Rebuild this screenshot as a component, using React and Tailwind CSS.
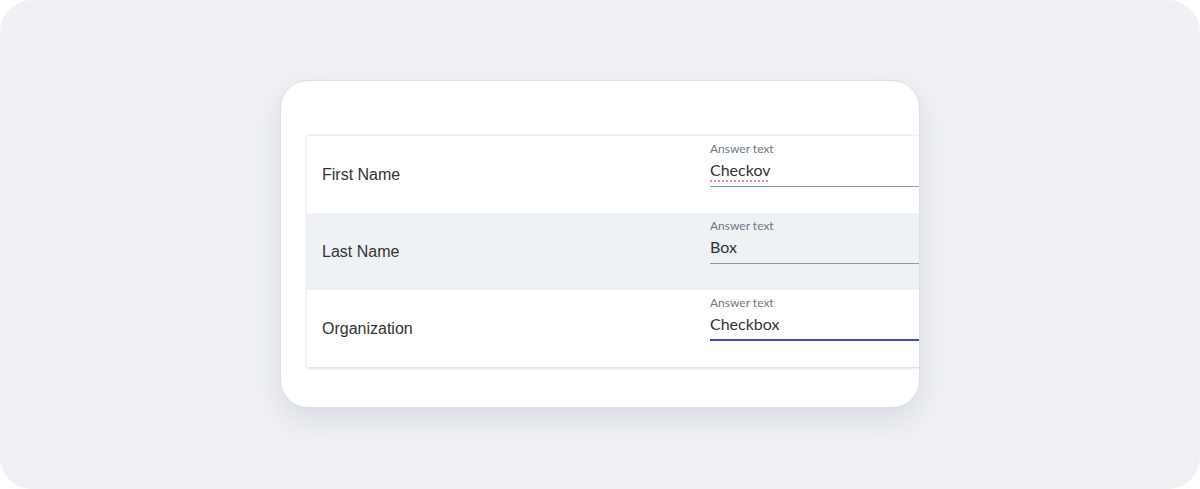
import React from 'react';

const rows = [
  { label: 'First Name', value: 'Checkov', misspelled: true },
  { label: 'Last Name', value: 'Box', shaded: true },
  { label: 'Organization', value: 'Checkbox', focused: true },
];

const App = () => {
  return (
    <div className="w-[1200px] h-[489px] bg-[#eff1f4] rounded-[32px] flex justify-center pt-[80px]">
      <div className="w-[640px] h-[328px] bg-white rounded-[28px] border border-[#dcdfe4] shadow-[0_12px_28px_rgba(120,130,150,0.18)] overflow-hidden pt-[54px] pl-[26px]">
        <div className="w-[700px] border-t border-[#eceef0] shadow-[0_1px_3px_rgba(0,0,0,0.18)]">
          {rows.map((row) => (
            <div
              key={row.label}
              className={`h-[77px] flex ${row.shaded ? 'bg-[#eff2f5]' : 'bg-white'}`}
            >
              <div className="w-[403px] pl-[15px] self-center text-[16px] text-[#333] font-['Liberation_Sans',Arial,sans-serif]">
                {row.label}
              </div>
              <div className="flex-1 pt-[5px] font-['Lato',sans-serif]">
                <div className="text-[12px] leading-[16px] text-[#6b7785]">Answer text</div>
                <div
                  className={
                    row.focused
                      ? 'mt-[1px] pb-[3px] border-b-2 border-[#3b4db0]'
                      : 'mt-[1px] pb-[4px] border-b border-[#8a9bb0]'
                  }
                >
                  <span
                    className={`text-[16px] leading-[24px] text-[#333] ${
                      row.misspelled
                        ? 'underline decoration-dotted decoration-[#e57373] underline-offset-[5px]'
                        : ''
                    }`}
                  >
                    {row.value}
                  </span>
                </div>
              </div>
            </div>
          ))}
        </div>
      </div>
    </div>
  );
};

export default App;
